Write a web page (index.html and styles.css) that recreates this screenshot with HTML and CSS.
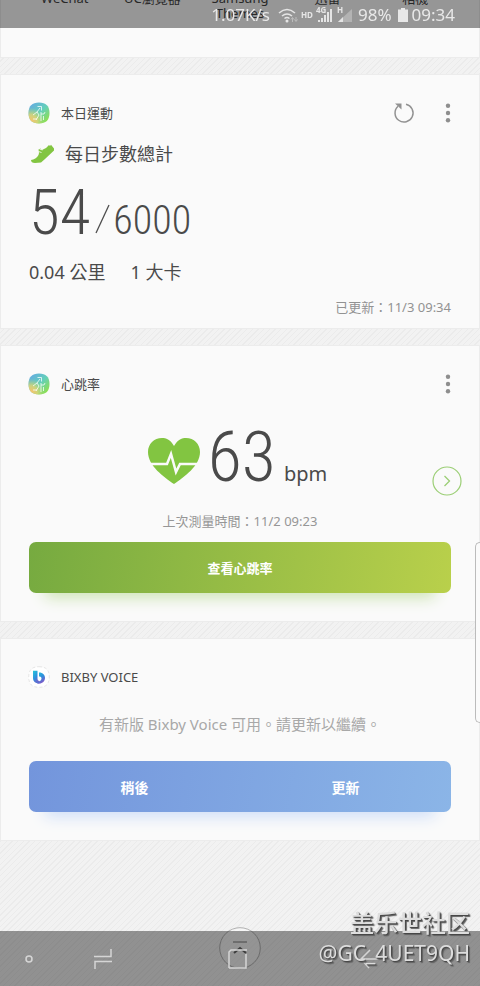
FILE: index.html
```html
<!DOCTYPE html>
<html lang="zh-Hant">
<head>
<meta charset="utf-8">
<meta name="viewport" content="width=device-width, initial-scale=1">
<title>Bixby Home</title>
<link rel="stylesheet" href="styles.css">
</head>
<body>
<svg class="defs" width="0" height="0" aria-hidden="true">
  <defs>
    <linearGradient id="blueGreen" x1="0" y1="0" x2="1" y2="1">
      <stop offset="0" stop-color="#65a5e8"/><stop offset=".5" stop-color="#63cfbb"/><stop offset="1" stop-color="#9de52f"/>
    </linearGradient>
    <radialGradient id="warm" cx=".1" cy=".9" r=".65">
      <stop offset="0" stop-color="#ffc06a"/><stop offset=".5" stop-color="#e4d56f" stop-opacity=".8"/><stop offset="1" stop-color="#c0df6a" stop-opacity="0"/>
    </radialGradient>
    <linearGradient id="bixby" x1="0" y1="0" x2=".6" y2="1">
      <stop offset="0" stop-color="#25c6d8"/><stop offset=".55" stop-color="#2e91dd"/><stop offset="1" stop-color="#7d58c8"/>
    </linearGradient>
    <symbol id="health" viewBox="0 0 22 22">
      <path d="M11 .5C18 .5 21.500 4 21.500 11S18 21.500 11 21.500.5 18 .5 11 4 .5 11 .5Z" fill="url(#blueGreen)"/>
      <path d="M11 .5C18 .5 21.500 4 21.500 11S18 21.500 11 21.500.5 18 .5 11 4 .5 11 .5Z" fill="url(#warm)"/>
      <g fill="none" stroke="#fff" stroke-opacity=".75"><path d="M9.500 4.500h4v4M12 6l-3 4-4 3M9 10l2 3-3 5M5 17h4M13 10v9M13 12h3l1-2M15.500 14v4"/></g>
    </symbol>
    <symbol id="more" viewBox="0 0 6 20"><g fill="#8e8e8e"><circle cx="3" cy="2.800" r="2.200"/><circle cx="3" cy="10" r="2.200"/><circle cx="3" cy="17.200" r="2.200"/></g></symbol>
  </defs>
</svg>

<main class="feed">
  <section class="card shortcuts">
    <a href="#">WeChat</a><a href="#">UC瀏覽器</a><a href="#">Samsung<br>Themes</a><a href="#">迅雷</a><a href="#">相機</a>
  </section>

  <section class="card steps">
    <header class="card-head">
      <svg class="app-icon" aria-hidden="true"><use href="#health"/></svg>
      <h2>本日運動</h2>
      <button class="icon-button refresh" aria-label="重新整理">
        <svg width="22" height="22" viewBox="0 0 22 22"><path d="M13 2.200A9 9 0 1 1 5 4.300" fill="none" stroke="#929292" stroke-width="1.500"/><path d="M2 1.500h6.500v6Z" fill="#929292"/></svg>
      </button>
      <button class="icon-button" aria-label="更多選項"><svg width="6" height="20"><use href="#more"/></svg></button>
    </header>
    <h3 class="steps-title">
      <svg width="26" height="20" viewBox="0 0 26 20" aria-hidden="true"><path d="M2 16C5 15.500 8 14 9.500 11L10 9 9.500 5.500 11.500 4.500 13 6 17 4 20 1 21 2 22 .8 25 4.500 25 6.500 16 15 12 18.500 6 19Q2 19 2 16Z" fill="#82c541"/><path d="m12.500 8.500-3-1m4-1.500-3-1" stroke="#fff" stroke-width=".8"/></svg>
      每日步數總計
    </h3>
    <p class="step-count"><span class="figure">54</span><svg width="15" height="30" viewBox="0 0 15 30" aria-label="/"><path d="M14 1 1 29" stroke="#4d4d4d" stroke-width="1.300"/></svg><span class="goal">6000</span></p>
    <p class="totals"><span>0.04 公里</span><span>1 大卡</span></p>
    <p class="updated">已更新：11/3 09:34</p>
  </section>

  <section class="card heart">
    <header class="card-head">
      <svg class="app-icon" aria-hidden="true"><use href="#health"/></svg>
      <h2>心跳率</h2>
      <button class="icon-button" aria-label="更多選項"><svg width="6" height="20"><use href="#more"/></svg></button>
    </header>
    <p class="rate">
      <svg width="52" height="48" viewBox="0 0 52 48" aria-hidden="true"><path d="M26 9C22 2 18 1 14 1 6 1 0 7 0 15c0 14 16 25 26 32 10-7 26-18 26-32C52 7 46 1 38 1c-4 0-8 1-12 8Z" fill="#82c541"/><path d="M2 27h17l4-10 5 18 4-8h18" fill="none" stroke="#fafafa" stroke-width="2.500"/></svg>
      <span class="rate-value">63</span><span class="unit">bpm</span>
    </p>
    <p class="measured">上次測量時間：11/2 09:23</p>
    <button class="action green">查看心跳率</button>
    <button class="next" aria-label="下一頁"><svg width="30" height="30" viewBox="0 0 30 30"><circle cx="15" cy="15" r="14" fill="none" stroke="#9bce75" stroke-width="1.200"/><path d="m12.500 10 5 5-5 5" fill="none" stroke="#9bce75" stroke-width="1.300"/></svg></button>
  </section>

  <section class="card bixby">
    <header class="card-head">
      <svg class="app-icon" viewBox="0 0 22 22" aria-hidden="true"><path d="M11 .7C18 .7 21.300 4 21.300 11S18 21.300 11 21.300.7 18 .7 11 4 .7 11 .7Z" fill="#fff" stroke="#d5d5d5" stroke-width=".6" stroke-dasharray="3 2"/><path d="M5 4.800h4.500v8.200q0 2 2 2v2.500C7 17.500 5 15 5 12Z" fill="url(#bixby)"/><path d="M11 6.500c4 0 6 2.500 6 5.500s-2.500 5.500-5.500 5.500c-1.500 0-3-.5-4-1.500 3 0 6-1 6-3.500 0-1.500-1-2-2.500-2Z" fill="url(#bixby)"/></svg>
      <h2>BIXBY VOICE</h2>
    </header>
    <p class="notice">有新版 Bixby Voice 可用。請更新以繼續。</p>
    <div class="action blue"><button>稍後</button><button>更新</button></div>
  </section>
</main>

<div class="edge-handle"></div>

<div class="status-bar">
  <span>1.07K/s</span>
  <svg width="55" height="18" viewBox="0 0 55 18" aria-hidden="true"><g fill="none" stroke="#e5e5e5" stroke-width="1.500"><path d="M1 7Q9 0 17 7M4 10q5-4 10 0M6.500 12.500q2.500-2 5 0"/></g><circle cx="9" cy="15" r="1.500" fill="#e5e5e5"/><path d="M14.500 16v-4m-1.500 1.500 1.500-2 1.500 2M18 11v4m-1.500-1.500 1.500 2 1.500-2" fill="none" stroke="#bbb"/><path d="M41 16v-2M44 16v-4M47 16V9M50 16V6M53 16V3" stroke="#e5e5e5" stroke-width="2"/><text class="network" x="23" y="12">HD</text><text class="network" x="38" y="7">4G</text></svg>
  <svg class="signal" width="15" height="18" viewBox="0 0 15 18" aria-hidden="true"><path d="M1 16 15 3v13Z" fill="#b3b3b3"/><path d="M1 16 6 11v5Z" fill="#e5e5e5"/><text class="network" x="0" y="7">H</text></svg>
  <span>98%</span>
  <svg class="battery" width="10" height="14" viewBox="0 0 10 14" aria-hidden="true"><path d="M3 0h4v1.500h3V14H0V1.500h3Z" fill="#e8e8e8"/></svg>
  <time>09:34</time>
</div>

<button class="to-top" aria-label="回到頂端"><svg width="42" height="42" viewBox="0 0 42 42"><circle cx="21" cy="21" r="20.300" fill="#fff" fill-opacity=".4" stroke="#b0b0b0"/><path d="M14 15h14" stroke="#777"/><path d="m15 26 6-5 6 5" fill="none" stroke="#666" stroke-width="2"/></svg></button>

<nav class="nav-bar">
  <button aria-label="隱藏"><svg width="8" height="8" viewBox="0 0 8 8"><circle cx="4" cy="4" r="3"/></svg></button>
  <button aria-label="最近使用"><svg width="20" height="22" viewBox="0 0 20 22"><path d="M1 8.500h17V1M19 13.500H2V21"/></svg></button>
  <button aria-label="首頁"><svg width="20" height="20" viewBox="0 0 20 20"><path d="M1 19V3l2-2h16M18 5v14H1"/></svg></button>
  <button aria-label="返回"><svg width="20" height="20" viewBox="0 0 20 20"><path d="M19 10H2m8-9-9 9 8 9"/></svg></button>
</nav>

<div class="watermark"><span>盖乐世社区</span><span class="author">@GC_4UET9QH</span></div>
</body>
</html>
```

FILE: styles.css
```css
* { box-sizing: border-box; }

body {
  margin: 0;
  min-height: 100vh;
  overflow: hidden;
  color: #4a4a4a;
  font-family: "Noto Sans", "Noto Sans CJK TC", sans-serif;
  background: repeating-linear-gradient(135deg, #f2f2f2 0 3px, #ebebeb 3px 4px);
}

h2, h3, p { margin: 0; font-weight: 400; }

button {
  padding: 0;
  border: 0;
  background: none;
  color: inherit;
  font: inherit;
}

svg { display: block; flex: none; }
.defs { position: absolute; }

.feed { display: flex; flex-direction: column; gap: 18px; }

.card {
  position: relative;
  margin: 0 1px;
  padding: 26px 28px 0;
  background: #fafafa;
  box-shadow: 0 0 0 1px #ececec;
}

.shortcuts {
  display: grid;
  grid-template-columns: repeat(5, 1fr);
  height: 57px;
  padding: 0 20px;
  overflow: hidden;
  font-size: 13px;
  line-height: 15px;
  text-align: center;
}
.shortcuts a { margin-top: -9px; color: #444; text-decoration: none; }

.card-head { display: flex; align-items: center; height: 24px; }
.card-head h2 { flex: 1; margin-left: 11px; font-size: 13px; line-height: 24px; }
.app-icon { width: 22px; height: 22px; margin-left: -1px; }
.icon-button { display: grid; place-items: center; width: 6px; height: 24px; }
.refresh { width: 22px; margin-right: 30px; }

.steps { height: 253px; }
.steps-title { display: flex; align-items: center; gap: 10px; margin-top: 16px; font-size: 18px; line-height: 26px; }
.step-count { display: flex; align-items: baseline; height: 60px; margin-top: 16px; line-height: 60px; }
.figure, .goal, .rate-value {
  font-family: "Roboto Condensed", Roboto, sans-serif;
  font-weight: 300;
}
.figure { font-size: 63px; }
.goal { font-size: 40px; }
.step-count svg { margin: 0 3px 0 5px; }
.totals { display: flex; gap: 25px; margin-top: 15px; font-size: 18px; line-height: 28px; }
.updated { margin-top: 12px; color: #929292; font-size: 13px; line-height: 18px; text-align: right; }

.heart { height: 275px; }
.rate { display: flex; align-items: baseline; justify-content: center; height: 70px; margin-top: 26px; padding-right: 5px; line-height: 70px; }
.rate svg { align-self: center; margin-top: 8px; }
.rate-value { margin: 0 8px; font-size: 70px; }
.unit { font-size: 20px; }
.measured { margin-top: 20px; color: #969696; font-size: 13px; line-height: 18px; text-align: center; }

.action {
  display: flex;
  align-items: center;
  justify-content: center;
  width: 100%;
  height: 51px;
  border-radius: 7px;
  color: #fff;
  font-weight: 700;
}
.green {
  margin-top: 12px;
  font-size: 13px;
  background: linear-gradient(100deg, #76aa40, #b9d04b);
  box-shadow: 0 20px 16px -16px #c9e2ad;
}
.next { position: absolute; top: 120px; right: 17px; }

.bixby { height: 201px; }
.notice { margin-top: 22px; color: #a8a8a8; font-size: 15px; line-height: 26px; text-align: center; }
.blue {
  margin-top: 24px;
  font-size: 14px;
  background: linear-gradient(100deg, #7395dc, #8bb5e7);
  box-shadow: 0 20px 16px -16px #cbdcf8;
}
.blue button { flex: 1; height: 100%; }

.edge-handle {
  position: fixed;
  top: 542px;
  right: 0;
  width: 5px;
  height: 181px;
  border: 1px solid #bbb;
  border-right: 0;
  border-radius: 5px 0 0 5px;
  background: #fafafa;
}

.status-bar {
  position: fixed;
  top: 0;
  left: 0;
  right: 0;
  display: flex;
  align-items: center;
  justify-content: flex-end;
  height: 28px;
  padding: 2px 25px 0 0;
  background: rgb(0 0 0 / 40%);
  color: #e8e8e8;
  font-size: 17px;
  line-height: 26px;
}
.status-bar svg { margin-left: 8px; }
.status-bar .signal { margin: 0 6px 0 4px; }
.status-bar .battery { margin: 0 4px 0 6px; }
.network { fill: #e5e5e5; font-size: 8px; font-weight: 700; }

.to-top { position: fixed; bottom: 17px; left: calc(50% - 21px); }

.nav-bar {
  position: fixed;
  left: 0;
  right: 0;
  bottom: 0;
  display: grid;
  grid-template-columns: 12% 19% 37% 18%;
  align-items: center;
  height: 55px;
  background: rgb(0 0 0 / 40%);
}
.nav-bar button { display: grid; place-items: center; height: 100%; }
.nav-bar svg { fill: none; stroke: #d5d5d5; stroke-width: 1.500; }

.watermark {
  position: fixed;
  right: 10px;
  bottom: 18px;
  display: flex;
  flex-direction: column;
  align-items: flex-end;
  color: #ddd;
  font-family: "Noto Sans", "Noto Sans CJK SC", sans-serif;
  font-size: 24px;
  font-weight: 500;
  line-height: 30px;
  text-shadow: 1px 1px 1px #444, 2px 2px 1px #666;
}
.author { font-size: 21px; font-weight: 400; }
```
